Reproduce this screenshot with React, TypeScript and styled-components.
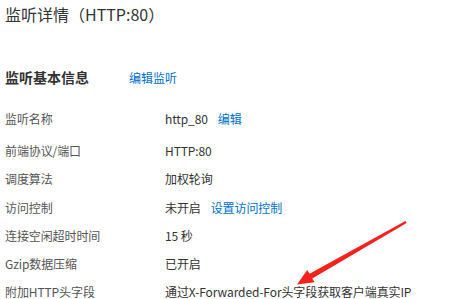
import React from 'react';
import styled, { createGlobalStyle } from 'styled-components';

const GlobalStyle = createGlobalStyle`
  html, body {
    margin: 0;
    padding: 0;
    background: #fff;
  }
  body {
    font-family: "Noto Sans CJK SC", "Liberation Sans", sans-serif;
    color: #333;
  }
`;

const Page = styled.div`
  position: relative;
  width: 456px;
  height: 299px;
  overflow: hidden;
  padding: 0 5px;
  box-sizing: border-box;
`;

const Title = styled.h1`
  margin: 0;
  font-size: 16px;
  font-weight: 400;
  line-height: 28px;
  color: #333;
`;

const SectionHeader = styled.div`
  display: flex;
  align-items: center;
  margin-top: 39px;
  height: 20px;
`;

const SectionTitle = styled.h2`
  margin: 0;
  width: 124px;
  font-size: 14px;
  font-weight: 700;
  color: #333;
`;

const Link = styled.a`
  font-size: 12px;
  color: #0070cc;
  text-decoration: none;
  cursor: pointer;
`;

const InfoList = styled.dl`
  margin: 17px 0 0;
  display: flex;
  flex-direction: column;
`;

const Row = styled.div<{ $extra?: number }>`
  display: flex;
  align-items: center;
  height: 28.3px;
  margin-bottom: ${(p) => p.$extra ?? 0}px;
  font-size: 12px;
  letter-spacing: -0.1px;
`;

const Label = styled.dt`
  width: 160px;
  color: #555;
`;

const Value = styled.dd`
  margin: 0;
  display: flex;
  align-items: center;
  gap: 10px;
  color: #333;
`;

const Arrow = styled.svg`
  position: absolute;
  left: 0;
  top: 0;
  pointer-events: none;
`;

interface Item {
  label: string;
  value: string;
  link?: string;
}

const items: Item[] = [
  { label: '监听名称', value: 'http_80', link: '编辑' },
  { label: '前端协议/端口', value: 'HTTP:80' },
  { label: '调度算法', value: '加权轮询' },
  { label: '访问控制', value: '未开启', link: '设置访问控制' },
  { label: '连接空闲超时时间', value: '15 秒' },
  { label: 'Gzip数据压缩', value: '已开启' },
  { label: '附加HTTP头字段', value: '通过X-Forwarded-For头字段获取客户端真实IP' },
];

const App: React.FC = () => {
  return (
    <>
      <GlobalStyle />
      <Page>
        <Title>监听详情（HTTP:80）</Title>
        <SectionHeader>
          <SectionTitle>监听基本信息</SectionTitle>
          <Link>编辑监听</Link>
        </SectionHeader>
        <InfoList>
          {items.map((item, i) => (
            <Row key={item.label} $extra={i === 0 ? 4 : 0}>
              <Label>{item.label}</Label>
              <Value>
                <span>{item.value}</span>
                {item.link && <Link>{item.link}</Link>}
              </Value>
            </Row>
          ))}
        </InfoList>
        <Arrow width="456" height="299" viewBox="0 0 456 299">
          <polygon
            fill="#f2231d"
            points="406.6,222.9 312.3,278.6 314.6,282.3 297,284.5 307.2,270 309.5,273.8 405.4,221.1"
          />
        </Arrow>
      </Page>
    </>
  );
};

export default App;
